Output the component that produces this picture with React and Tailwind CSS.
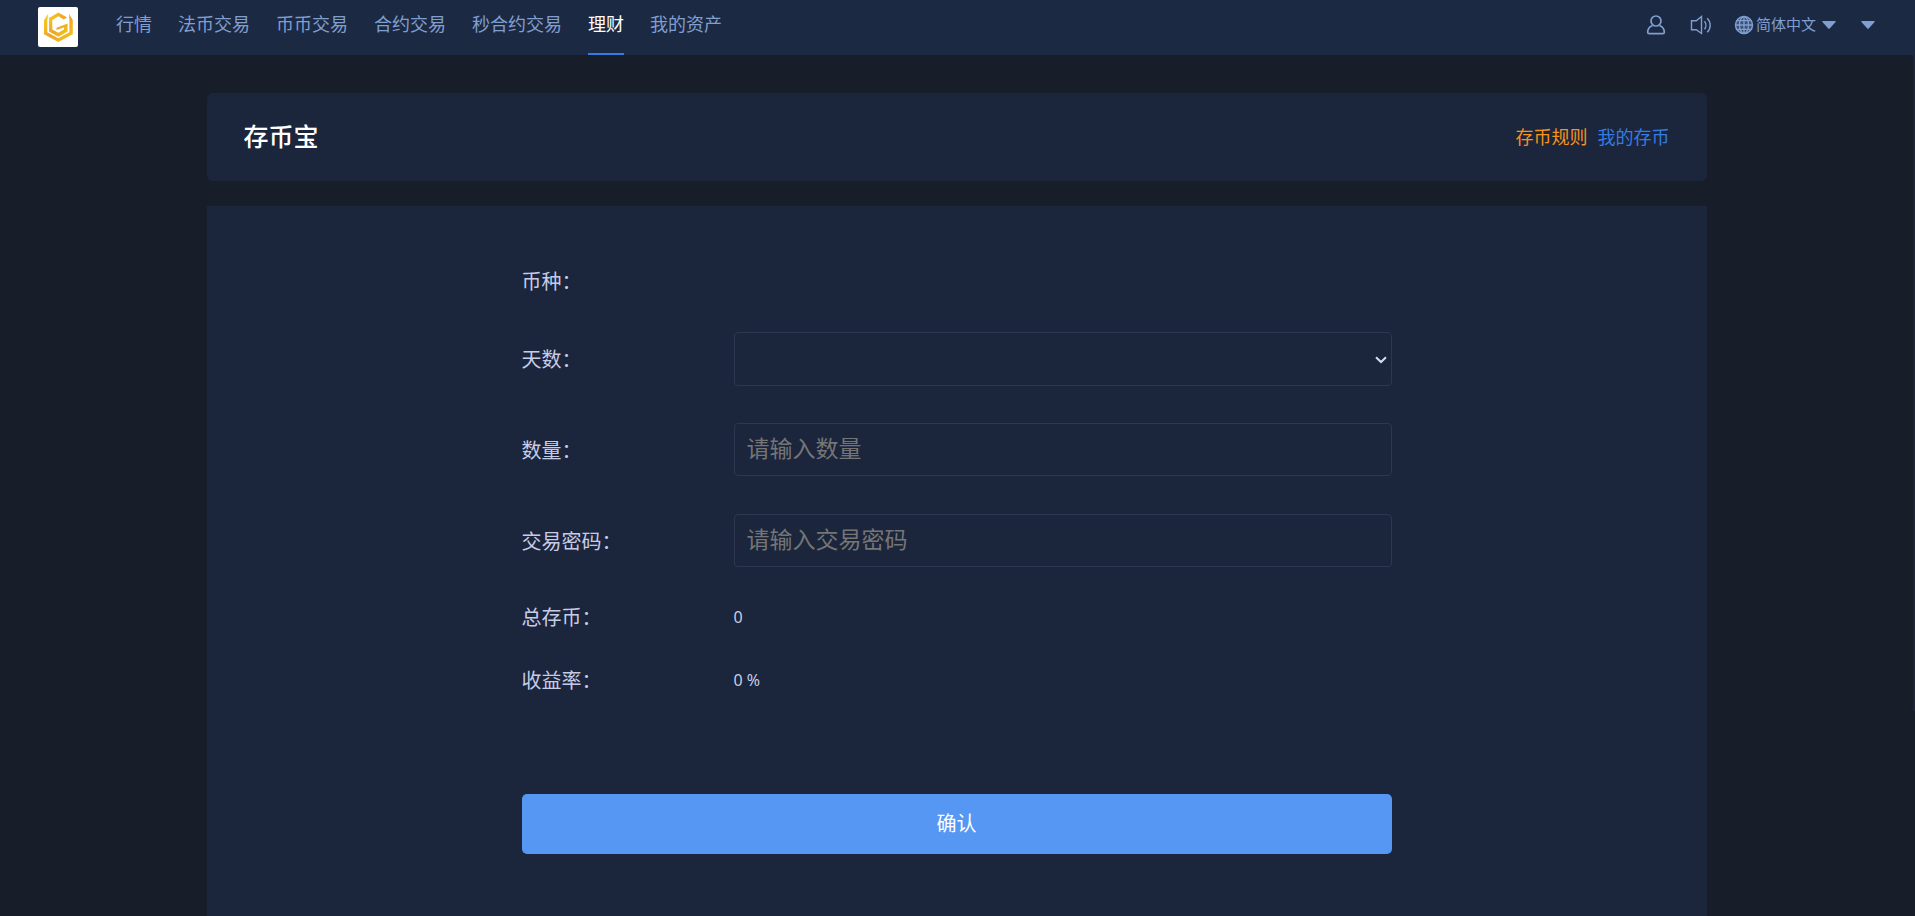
const NAV = [
  { label: '行情' },
  { label: '法币交易' },
  { label: '币币交易' },
  { label: '合约交易' },
  { label: '秒合约交易' },
  { label: '理财', active: true },
  { label: '我的资产' },
];

function Logo() {
  return (
    <svg viewBox="0 0 40 40" className="size-10 rounded-xs bg-white" role="img" aria-label="GC">
      <defs>
        <linearGradient id="gold" x1="0" y1="0" x2="1" y2="1">
          <stop offset="0" stopColor="#f7d21c" />
          <stop offset="0.5" stopColor="#eda526" />
          <stop offset="1" stopColor="#f5c71a" />
        </linearGradient>
      </defs>
      <g fill="url(#gold)">
        <path d="M10.200 7 6 13v14.200L20.300 35 34.800 27.200V13L31 7l.4 7v11.200l-11.100 6-11-6V14z" />
        <path d="M20.300 5.500 11 11v13.500l9.300 5.200 9.300-5.200v-8L18.500 20.800V23l7.500-2.600v2.100l-5.700 3.300-6-3.300v-9.600l6-3.600 5.500 3.200 3.300-2z" />
      </g>
    </svg>
  );
}

function UserIcon() {
  return (
    <svg viewBox="0 0 20 20" className="size-5" fill="none" stroke="currentColor" strokeWidth="1.700">
      <circle cx="10" cy="6" r="5" />
      <path d="M6.500 10.500C3.300 11.800 1.700 14.200 1.700 17.200c0 .9.600 1.500 1.500 1.500h13.600c.9 0 1.500-.6 1.500-1.500 0-3-1.600-5.400-4.800-6.700" />
    </svg>
  );
}

function SpeakerIcon() {
  return (
    <svg viewBox="0 0 22 20" className="h-5 w-[22px]" fill="none" stroke="currentColor" strokeWidth="1.400">
      <path d="M1.500 5.700h4.800L11.500 1.500v17L6.300 14.800H1.500z" />
      <path d="M14.500 6.200c1.800 2.300 1.800 5.800 0 8.100M17.200 3.200c4 3.900 4 10.200 0 14.100" />
    </svg>
  );
}

function GlobeIcon() {
  return (
    <svg viewBox="0 0 20 20" className="size-5" fill="none" stroke="currentColor">
      <circle cx="10" cy="10" r="8.500" strokeWidth="1.500" fill="currentColor" fillOpacity="0.350" />
      <ellipse cx="10" cy="10" rx="4.500" ry="8.500" strokeWidth="1.300" />
      <path d="M10 1.500v17M1.500 10h17M3 5.700h14M3 14.300h14" strokeWidth="1.300" />
    </svg>
  );
}

function Caret() {
  return (
    <svg viewBox="0 0 14 8" className="h-2 w-3.5" fill="currentColor" aria-hidden="true">
      <path d="M1 0h12c.8 0 1 .5.600 1L7.700 7.600c-.4.500-1 .5-1.400 0L.400 1C0 .5.200 0 1 0z" />
    </svg>
  );
}

function Row({ label, id, className, children }) {
  return (
    <div className={`flex items-center ${className}`}>
      <label htmlFor={id} className="w-[212px] shrink-0 pt-0.5 text-xl leading-8">
        {label}
      </label>
      {children}
    </div>
  );
}

export default function App() {
  return (
    <div className="flex h-screen flex-col overflow-hidden bg-[#171d29] font-['Noto_Sans','Noto_Sans_CJK_SC',sans-serif] text-[#c7cce6]">
      <header className="flex h-[55px] shrink-0 items-stretch justify-between bg-[#1c2943] pr-10 pl-[38px] text-[#7f9fd0]">
        <div className="flex">
          <a href="#home" className="mr-[38px] pt-[7px]">
            <Logo />
          </a>
          <nav className="flex gap-[26px] text-lg leading-[48px]">
            {NAV.map((item) => (
              <a
                key={item.label}
                href="#"
                className={item.active ? 'border-b-2 border-[#357ce1] text-white' : ''}
              >
                {item.label}
              </a>
            ))}
          </nav>
        </div>
        <div className="flex h-[49px] items-center">
          <button type="button" aria-label="用户" className="mr-6">
            <UserIcon />
          </button>
          <button type="button" aria-label="公告" className="mr-[22px]">
            <SpeakerIcon />
          </button>
          <button type="button" className="mr-[25px] flex items-center gap-0.5 text-[15px]">
            <GlobeIcon />
            <span className="mr-1">简体中文</span>
            <Caret />
          </button>
          <button type="button" aria-label="更多">
            <Caret />
          </button>
        </div>
      </header>

      <div className="flex min-h-0 grow">
        <main className="mx-auto flex w-full max-w-[1500px] flex-col gap-[25px] pt-[38px]">
          <section className="flex h-[88px] shrink-0 items-center justify-between rounded-md bg-[#1b253c] px-[37px]">
            <h1 className="text-[25px] font-medium text-white">存币宝</h1>
            <div className="flex gap-2.5 text-lg">
              <a href="#rules" className="text-[#f7931a]">存币规则</a>
              <a href="#mine" className="text-[#357ce1]">我的存币</a>
            </div>
          </section>

          <section className="grow bg-[#1b253c]">
            <form className="mx-auto w-[58%] pt-[58px]">
              <Row label="币种：" className="mb-[34px]" />
              <Row label="天数：" id="days" className="mb-[37px]">
                <div className="relative grow">
                  <select
                    id="days"
                    className="block h-[54px] w-full appearance-none rounded-sm border border-[#2c3850] bg-transparent px-3 text-base"
                  />
                  <svg
                    viewBox="0 0 12 8"
                    className="pointer-events-none absolute top-6 right-[5px] h-2 w-3"
                    fill="none"
                    stroke="#d5dcec"
                    strokeWidth="2"
                    aria-hidden="true"
                  >
                    <path d="M1 1.200 6 6l5-4.800" />
                  </svg>
                </div>
              </Row>
              <Row label="数量：" id="amount" className="mb-[38px]">
                <input
                  id="amount"
                  placeholder="请输入数量"
                  className="h-[53px] min-w-0 grow rounded-sm border border-[#2c3850] bg-transparent px-3 pb-1 text-[23px] placeholder:text-[#757575]"
                />
              </Row>
              <Row label="交易密码：" id="password" className="mb-[33px]">
                <input
                  id="password"
                  type="password"
                  placeholder="请输入交易密码"
                  className="h-[53px] min-w-0 grow rounded-sm border border-[#2c3850] bg-transparent px-3 pb-1 text-[23px] placeholder:text-[#757575]"
                />
              </Row>
              <Row label="总存币：" className="mb-[29px]">
                <span className="text-base">0</span>
              </Row>
              <Row label="收益率：" className="mb-[97px]">
                <span className="text-base">0 %</span>
              </Row>
              <button type="button" className="h-[60px] w-full rounded-[5px] bg-[#5697f4] text-xl text-white">
                确认
              </button>
            </form>
          </section>
        </main>
        <div className="h-[656px] w-0.5 rounded-b-sm bg-[#20263a]" />
      </div>
    </div>
  );
}
